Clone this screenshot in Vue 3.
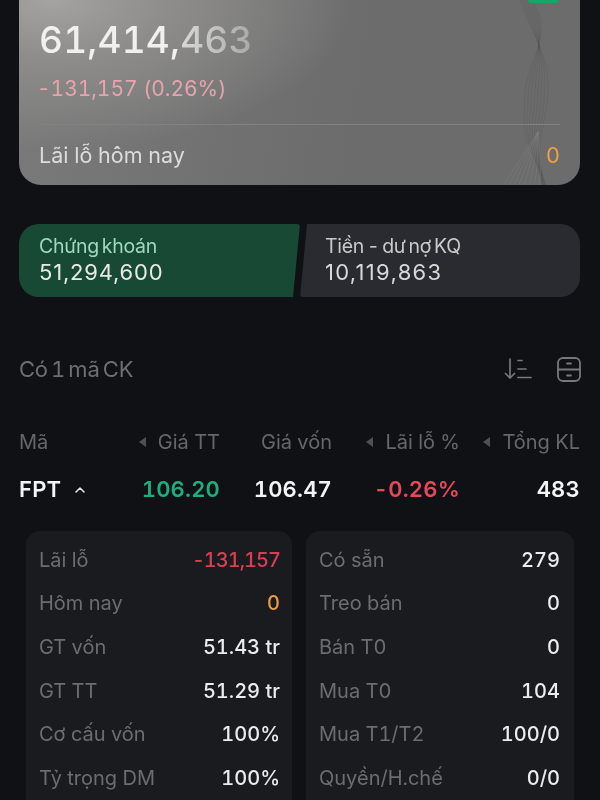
<script setup>
const leftRows = [
  { label: 'Lãi lỗ', value: '-131,157', tone: 'red' },
  { label: 'Hôm nay', value: '0', tone: 'orange' },
  { label: 'GT vốn', value: '51.43 tr' },
  { label: 'GT TT', value: '51.29 tr' },
  { label: 'Cơ cấu vốn', value: '100%' },
  { label: 'Tỷ trọng DM', value: '100%' }
]

const rightRows = [
  { label: 'Có sẵn', value: '279' },
  { label: 'Treo bán', value: '0' },
  { label: 'Bán T0', value: '0' },
  { label: 'Mua T0', value: '104' },
  { label: 'Mua T1/T2', value: '100/0' },
  { label: 'Quyền/H.chế', value: '0/0' }
]

const panels = [leftRows, rightRows]

// faint wave lines on the summary card
const waves = [0, 3, 6, 9, 12, 15, 18, 21].map(i =>
  `M${50 + i * 0.6} 0 C${66 + i} 45 ${84 - i * 1.6} 60 ${76 - i} 110 C${70 - i} 140 ${66 + i * 0.2} 160 ${76 - i * 0.2} 185`
)
const hatch = [0, 1, 2, 3, 4, 5, 6, 7].map(i =>
  `M${34 + i * 5} 185 C${44 + i * 4} 168 ${56 + i * 2} 150 ${68} 132`
)
</script>

<template>
  <div class="screen">
    <section class="card">
      <svg class="waves" width="110" height="185" viewBox="0 0 110 185" fill="none">
        <path v-for="d in waves" :key="d" :d="d" stroke="#4e4e4e" stroke-opacity="0.22" />
        <path v-for="d in hatch" :key="d" :d="d" stroke="#8a8a8a" stroke-opacity="0.3" />
      </svg>
      <div class="pill"></div>
      <div class="total">61,414,<span class="fade">463</span></div>
      <div class="change">-131,157 (0.26%)</div>
      <div class="today">
        <span>Lãi lỗ hôm nay</span>
        <span class="orange">0</span>
      </div>
    </section>

    <section class="tabs">
      <div class="tab active">
        <span class="tab-label">Chứng khoán</span>
        <span class="tab-value">51,294,600</span>
      </div>
      <div class="tab other">
        <span class="tab-label">Tiền - dư nợ KQ</span>
        <span class="tab-value">10,119,863</span>
      </div>
    </section>

    <section class="list-head">
      <span>Có 1 mã CK</span>
      <div class="tools">
        <svg width="28" height="24" viewBox="0 0 28 24" fill="none" stroke="#77787b" stroke-width="1.7" stroke-linecap="round" stroke-linejoin="round">
          <path d="M6 2v19M1.500 16.500 6 21l4.500-4.500" />
          <path d="M14 3.500h4M14 12h8M14 20.500h13" />
        </svg>
        <svg width="24" height="25" viewBox="0 0 24 25" fill="none" stroke="#77787b" stroke-width="1.8" stroke-linecap="round">
          <rect x="1" y="1" width="22" height="23" rx="5" />
          <path d="M1 12.500h22M10 6.500h4M10 18.500h4" />
        </svg>
      </div>
    </section>

    <section class="table-head">
      <span class="first">Mã</span>
      <span><i class="tri"></i>Giá TT</span>
      <span>Giá vốn</span>
      <span><i class="tri"></i>Lãi lỗ %</span>
      <span><i class="tri"></i>Tổng KL</span>
    </section>

    <section class="table-row">
      <span class="first">FPT
        <svg width="10" height="6" viewBox="0 0 10 6" fill="none" stroke="#e8e8e8" stroke-width="1.500" stroke-linecap="round" stroke-linejoin="round">
          <path d="M1 5 5 1l4 4" />
        </svg>
      </span>
      <span class="green">106.20</span>
      <span>106.47</span>
      <span class="red">-0.26%</span>
      <span>483</span>
    </section>

    <section class="details">
      <div v-for="(rows, i) in panels" :key="i" class="panel">
        <div v-for="row in rows" :key="row.label" class="detail">
          <span class="detail-label">{{ row.label }}</span>
          <span class="detail-value" :class="row.tone">{{ row.value }}</span>
        </div>
      </div>
    </section>
  </div>
</template>

<style scoped>
.screen {
  width: 600px;
  height: 800px;
  overflow: hidden;
  background: #101114;
  font-family: Inter, "Liberation Sans", sans-serif;
  font-variant-numeric: tabular-nums;
  color: #f2f2f2;
  filter: blur(0.55px);
}
.card {
  position: relative;
  box-sizing: border-box;
  width: 561px;
  height: 185px;
  margin-left: 19px;
  padding: 18px 20px 0;
  border-radius: 0 0 22px 22px;
  background: radial-gradient(ellipse 300px 150px at 6% 0%, #a5a3a1 0%, #8d8c8b 40%, rgba(120, 120, 120, 0) 100%), linear-gradient(100deg, #7a7a7a, #6c6c6c 60%);
  overflow: hidden;
}
.waves {
  position: absolute;
  right: 0;
  top: 0;
}
.pill {
  position: absolute;
  right: 22px;
  top: 0;
  width: 30px;
  height: 3px;
  border-radius: 0 0 4px 4px;
  background: #12a968;
}
.total {
  position: relative;
  font-size: 37px;
  line-height: 44px;
  letter-spacing: 0.2px;
  font-weight: 500;
  color: #f1f0ef;
}
.fade {
  background: linear-gradient(90deg, #d8d8d8, #a9a9a9);
  -webkit-background-clip: text;
  background-clip: text;
  color: transparent;
}
.change {
  position: relative;
  margin-top: 14px;
  margin-left: -2px;
  font-size: 21px;
  line-height: 26px;
  letter-spacing: -0.05px;
  color: #e6a5ac;
}
.today {
  position: relative;
  display: flex;
  justify-content: space-between;
  align-items: center;
  margin-top: 22px;
  padding-top: 16px;
  border-top: 1px solid #828282;
  font-size: 21.500px;
  line-height: 28px;
  color: #dcdcdc;
}
.orange {
  color: #f0a044;
}
.tabs {
  display: flex;
  margin: 39px 20px 0 19px;
  height: 73px;
}
.tab {
  display: flex;
  flex-direction: column;
  justify-content: center;
  box-sizing: border-box;
  padding-bottom: 2px;
}
.tab.active {
  width: 281px;
  padding-left: 20px;
  border-radius: 20px 3px 3px 20px;
  background: #174935;
  clip-path: polygon(0 0, 100% 0, calc(100% - 7px) 100%, 0 100%);
}
.tab.other {
  flex: 1;
  padding-left: 25px;
  border-radius: 3px 20px 20px 3px;
  background: #2a2b30;
  clip-path: polygon(7px 0, 100% 0, 100% 100%, 0 100%);
}
.tab-label {
  font-size: 19.500px;
  line-height: 25px;
  letter-spacing: -0.3px;
  word-spacing: -2px;
}
.active .tab-label {
  color: #9fd9bd;
}
.other .tab-label {
  color: #c9c9cc;
}
.tab-value {
  font-size: 22px;
  line-height: 26px;
  letter-spacing: 0.8px;
  font-variant-numeric: normal;
  color: #e9e9e9;
}
.other .tab-value {
  letter-spacing: 1.300px;
  color: #d8d8da;
}
.list-head {
  display: flex;
  justify-content: space-between;
  align-items: center;
  margin: 58px 19px 0;
  height: 28px;
  font-size: 22px;
  letter-spacing: -0.2px;
  word-spacing: -2.500px;
  color: #6d6e71;
}
.tools {
  display: flex;
  align-items: center;
  gap: 25px;
}
.table-head,
.table-row {
  display: grid;
  grid-template-columns: 101px 100px 112px 128px 120px;
  margin-left: 19px;
  text-align: right;
}
.first {
  text-align: left;
}
.table-head {
  margin-top: 45px;
  height: 28px;
  line-height: 28px;
  font-size: 20px;
  color: #66676a;
}
.tri {
  display: inline-block;
  width: 0;
  height: 0;
  margin-right: 12px;
  vertical-align: 2px;
  border: 5px solid transparent;
  border-left: 0;
  border-right: 7px solid #4f5053;
}
.table-row {
  margin-top: 19px;
  height: 28px;
  line-height: 28px;
  font-size: 22px;
  font-weight: 600;
  letter-spacing: 0.2px;
  color: #f4f4f4;
}
.table-row svg {
  margin-left: 8px;
  vertical-align: 4px;
}
.green {
  color: #1fae7b;
}
.red {
  color: #e5485a;
}
.details {
  display: grid;
  grid-template-columns: 266px 268px;
  gap: 14px;
  margin: 28px 26px 0;
}
.panel {
  box-sizing: border-box;
  height: 300px;
  padding: 7px 12px 0 13px;
  border-radius: 14px;
  background: #191b1e;
}
.panel:last-child {
  padding-right: 14px;
}
.detail {
  display: flex;
  justify-content: space-between;
  align-items: center;
  height: 43.600px;
  font-size: 20px;
}
.detail-label {
  color: #6c6d70;
}
.detail-value {
  color: #ececec;
  font-weight: 500;
}
.detail-value.red {
  color: #d93f52;
  letter-spacing: -1px;
}
.detail-value.orange {
  color: #e99b45;
}
</style>
